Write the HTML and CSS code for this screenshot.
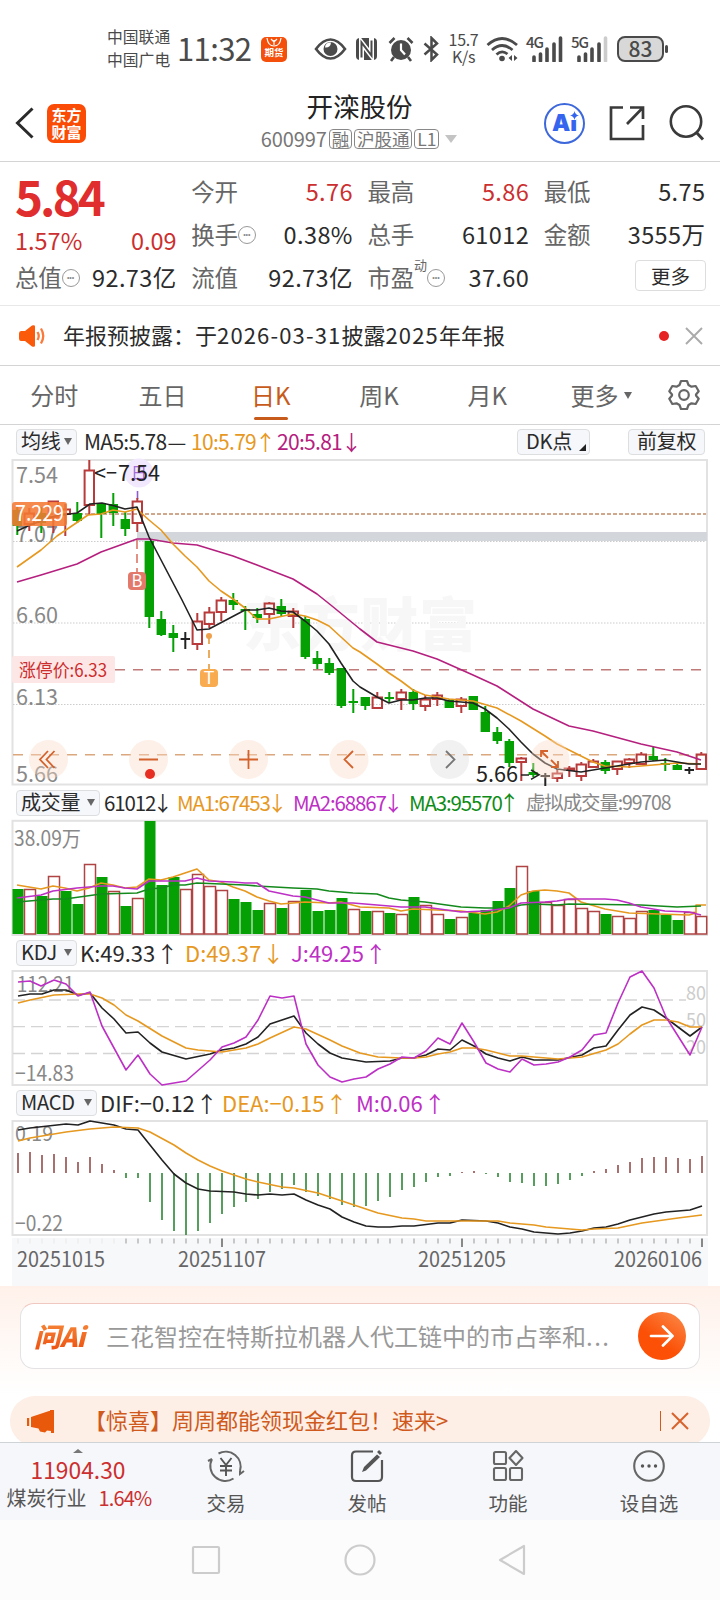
FILE: index.html
```html
<!DOCTYPE html>
<html lang="zh-CN">
<head>
    <meta charset="UTF-8">
    <meta name="viewport" content="width=device-width, initial-scale=1.0">
    <title>开滦股份 600997</title>
    <link rel="stylesheet" href="styles.css">
</head>
<body>
    <div class="statusbar">
        <div class="carriers"><span>中国联通</span><span>中国广电</span></div>
        <span class="clock">11:32</span>
        <span class="app-badge"><svg width="16" height="11" viewBox="0 0 16 11"><path d="M1 1q1 8 7 8t7-8M5 2l3 3 3-3M8 3v5" fill="none" stroke="#fff" stroke-width="1.200"/></svg><b>期货</b></span>
        <svg class="eye" width="33" height="24" viewBox="0 0 33 24"><path d="M2 12Q9 2.500 16.500 2.500T31 12Q24 21.500 16.500 21.500T2 12Z" fill="none" stroke="#4a4a4a" stroke-width="2.600"/><circle cx="16.500" cy="12" r="7" fill="#4a4a4a"/><path d="M11 10.500a5 5 0 0 1 6-5q-.5 5.500-6 5z" fill="#fff"/></svg>
        <svg class="nfc" width="23" height="24" viewBox="0 0 23 24"><rect x="1" y="1" width="21" height="22" rx="4" fill="#4a4a4a"/><path d="M6.500 24V5.500L16.500 18.500V0" fill="none" stroke="#fff" stroke-width="5"/><path d="M6.500 20.500V5.500L16.500 18.500V3.500" fill="none" stroke="#4a4a4a" stroke-width="2"/></svg>
        <svg class="alarm" width="26" height="26" viewBox="0 0 26 26"><circle cx="13" cy="14" r="10" fill="#4a4a4a"/><path d="M1.500 7l5-5M24.500 7l-5-5M6 21l-3 4M20 21l3 4" stroke="#4a4a4a" stroke-width="2.600"/><path d="M13 7.500V14l4 4.500" fill="none" stroke="#fff" stroke-width="2.200"/></svg>
        <svg class="bt" width="17" height="26" viewBox="0 0 17 26"><path d="M1.500 7.500L14 18.500 8.500 24V2L14 7.500 1.500 18.500" fill="none" stroke="#4a4a4a" stroke-width="2.500"/></svg>
        <div class="speed"><span>15.7</span><span>K/s</span></div>
        <svg class="wifi" width="33" height="26" viewBox="0 0 33 26"><g fill="none" stroke="#4a4a4a" stroke-width="2.800"><path d="M1.500 9Q16 -4 31 9"/><path d="M6 14Q16 5 26.500 14"/><path d="M10.500 18.500Q16 13.500 21.500 18"/></g><circle cx="16" cy="22.500" r="2.800" fill="#4a4a4a"/><path d="M26 19v6l-3.500-3zM28 19v6l3.500-3z" fill="#4a4a4a"/></svg>
        <div class="signal"><b>4G</b><svg width="36" height="26" viewBox="0 0 36 26"><path d="M7 21v4M13.500 18v7M20 13v12M27 8v17M33.500 2v23" stroke="#4a4a4a" stroke-width="3.600" stroke-linecap="round"/></svg></div>
        <div class="signal"><b>5G</b><svg width="36" height="26" viewBox="0 0 36 26"><path d="M7 21v4M13.500 18v7M20 13v12M27 8v17" stroke="#4a4a4a" stroke-width="3.600" stroke-linecap="round"/><path d="M33.500 2v23" stroke="#ccc" stroke-width="3.600" stroke-linecap="round"/></svg></div>
        <div class="battery">83</div>
    </div>

    <header class="header">
        <svg class="back" width="20" height="34" viewBox="0 0 20 34"><path d="M17.500 2.500L2.500 17l15 14.500" fill="none" stroke="#2b2b2b" stroke-width="3"/></svg>
        <div class="brand"><span>东方</span><span>财富</span></div>
        <div class="title">
            <h1>开滦股份</h1>
            <div class="code">600997<em>融</em><em>沪股通</em><em>L1</em><i class="caret"></i></div>
        </div>
        <div class="ai-btn">Ai<svg width="9" height="9" viewBox="0 0 9 9"><circle cx="3" cy="6" r="4" fill="#fff"/><path d="M4.500 0q.6 3.900 4.500 4.500-3.900.6-4.500 4.500Q3.900 5.100 0 4.500 3.900 3.900 4.500 0z" fill="#3565ee"/></svg></div>
        <svg class="share" width="36" height="36" viewBox="0 0 36 36"><path d="M14 2.500H2V34h32V20M21 2.500h13V14M34 2.500L18 19" fill="none" stroke="#3a3a3a" stroke-width="2.700"/></svg>
        <svg class="search" width="36" height="38" viewBox="0 0 36 38"><circle cx="17" cy="17.500" r="15.200" fill="none" stroke="#3a3a3a" stroke-width="2.600"/><path d="M27 28l7 7.500" stroke="#3a3a3a" stroke-width="3"/></svg>
    </header>

    <section class="quote">
        <div class="col col-price">
            <div class="price">5.84</div>
            <div class="row red change"><span>1.57%</span><span>0.09</span></div>
            <div class="row"><label>总值<i class="dots">•••</i></label><span>92.73亿</span></div>
        </div>
        <div class="col">
            <div class="row"><label>今开</label><span class="red">5.76</span></div>
            <div class="row"><label>换手<i class="dots">•••</i></label><span>0.38%</span></div>
            <div class="row"><label>流值</label><span>92.73亿</span></div>
        </div>
        <div class="col">
            <div class="row"><label>最高</label><span class="red">5.86</span></div>
            <div class="row"><label>总手</label><span>61012</span></div>
            <div class="row"><label>市盈<sup>动</sup><i class="dots">•••</i></label><span>37.60</span></div>
        </div>
        <div class="col">
            <div class="row"><label>最低</label><span>5.75</span></div>
            <div class="row"><label>金额</label><span>3555万</span></div>
            <div class="row end"><button class="more-btn">更多</button></div>
        </div>
    </section>

    <section class="notice">
        <svg width="26" height="22" viewBox="0 0 26 22"><path d="M0 8.500q0-2.500 2-2.500h4l7-5.500q3-1 3 1v19q0 2-3 1L6 16H2q-2 0-2-2.500z" fill="#fa5a0a"/><path d="M18.500 7q2.500 4 0 8M22 3.500q4.500 7.500 0 15" fill="none" stroke="#fa7a3a" stroke-width="2.300"/></svg>
        <p>年报预披露：于<span>2026-03-31</span>披露<span>2025</span>年年报</p>
        <i class="red-dot"></i>
        <svg width="18" height="18" viewBox="0 0 18 18"><path d="M1 1l16 16M17 1L1 17" stroke="#aaa" stroke-width="1.900"/></svg>
    </section>

    <nav class="tabs">
        <a>分时</a><a>五日</a><a class="active">日K</a><a>周K</a><a>月K</a>
        <a class="tab-more">更多<i class="tri"></i></a>
        <svg class="gear" width="32" height="32" viewBox="0 0 32 32"><path d="M13 2h6l1.500 4 3 1.700 4.200-.7 3 5.200-2.700 3.300v1l2.700 3.300-3 5.200-4.200-.7-3 1.700L19 30h-6l-1.500-4-3-1.700-4.200.7-3-5.200L4 16.500v-1l-2.700-3.300 3-5.200 4.200.7 3-1.700z" fill="none" stroke="#666" stroke-width="2.200" stroke-linejoin="round"/><circle cx="16" cy="16" r="4.800" fill="none" stroke="#666" stroke-width="2.200"/></svg>
    </nav>

    <div class="ind ind-ma">
        <span class="pick">均线<i class="tri"></i></span>
        <span>MA5:5.78<u>—</u></span>
        <span class="orange">10:5.79<b>↑</b></span>
        <span class="magenta">20:5.81<b>↓</b></span>
        <span class="pick dk">DK点<i class="corner"></i></span>
        <span class="pick fq">前复权</span>
    </div>
    <svg id="kline" class="chart" width="720" height="327" viewBox="0 459 720 327"></svg>

    <div class="ind ind-vol">
        <span class="pick">成交量<i class="tri"></i></span>
        <span class="now">61012<b>↓</b></span>
        <span class="orange">MA1:67453<b>↓</b></span>
        <span class="purple">MA2:68867<b>↓</b></span>
        <span class="green">MA3:95570<b>↑</b></span>
        <span class="gray">虚拟成交量:99708</span>
    </div>
    <svg id="volume" class="chart" width="720" height="116" viewBox="0 820 720 116"></svg>

    <div class="ind ind-kdj">
        <span class="pick">KDJ<i class="tri"></i></span>
        <span>K:49.33<b>↑</b></span>
        <span class="orange">D:49.37<b>↓</b></span>
        <span class="purple">J:49.25<b>↑</b></span>
    </div>
    <svg id="kdj" class="chart" width="720" height="116" viewBox="0 970 720 116"></svg>

    <div class="ind ind-macd">
        <span class="pick">MACD<i class="tri"></i></span>
        <span>DIF:−0.12<b>↑</b></span>
        <span class="orange">DEA:−0.15<b>↑</b></span>
        <span class="purple">M:0.06<b>↑</b></span>
    </div>
    <svg id="macd" class="chart" width="720" height="166" viewBox="0 1120 720 166"></svg>

    <section class="ask">
        <div class="ask-box">
            <span class="ask-logo">问Ai</span>
            <span class="ask-text">三花智控在特斯拉机器人代工链中的市占率和<u>...</u></span>
            <span class="ask-go"><svg width="26" height="22" viewBox="0 0 26 22"><path d="M2 11h21M14 1.500l9.500 9.500-9.500 9.500" fill="none" stroke="#fff" stroke-width="2.700" stroke-linecap="round" stroke-linejoin="round"/></svg></span>
        </div>
    </section>

    <section class="promo-wrap">
        <div class="promo">
            <svg width="27" height="23" viewBox="0 0 27 23"><path d="M0 8h2.200v8H0zM4 7L22 1h1V0h4v23h-3v-2l-4-.5-2 2-5-1-1.500-3L4 17z" fill="#e8590c"/></svg>
            <p>【惊喜】周周都能领现金红包！速来&gt;</p>
            <i class="bar"></i>
            <svg width="18" height="18" viewBox="0 0 18 18"><path d="M1 1l16 16M17 1L1 17" stroke="#d9622b" stroke-width="2"/></svg>
        </div>
    </section>

    <nav class="bottom">
        <div class="sector">
            <i class="up"></i>
            <strong>11904.30</strong>
            <div><span>煤炭行业</span><span class="red">1.64%</span></div>
        </div>
        <a>
            <svg width="38" height="34" viewBox="0 0 38 34"><path d="M11.500 4.500A15 15 0 0 1 33 22M26.500 29.500A15 15 0 0 1 5 10M1 12l4-2M33 22v3l4-3" fill="none" stroke="#666" stroke-width="2"/><path d="M13.500 9l5.500 7 5.500-7M13 17h12M13 21.500h12M19 16v11" fill="none" stroke="#555" stroke-width="1.900"/></svg>
            <span>交易</span>
        </a>
        <a>
            <svg width="34" height="34" viewBox="0 0 34 34"><path d="M23 2.500H6Q2 2.500 2 6.500V28q0 4 4 4h22q4 0 4-4V11" fill="none" stroke="#555" stroke-width="2.200"/><path d="M12 23l2-5L27 5.500l3 2.500L16 21.500z" fill="#555"/><path d="M28.500 4.500l2-2" stroke="#555" stroke-width="4"/></svg>
            <span>发帖</span>
        </a>
        <a>
            <svg width="34" height="34" viewBox="0 0 34 34"><g fill="none" stroke="#666" stroke-width="2.100"><rect x="3" y="3" width="12" height="12" rx="1.500"/><rect x="3" y="19" width="12" height="12" rx="1.500"/><rect x="19" y="19" width="12" height="12" rx="1.500"/><path d="M25 2l6.500 7-6.500 7-6.500-7z" stroke-linejoin="round"/></g></svg>
            <span>功能</span>
        </a>
        <a>
            <svg width="34" height="34" viewBox="0 0 34 34"><circle cx="17" cy="17" r="14.800" fill="none" stroke="#666" stroke-width="2.100"/><g fill="#555"><circle cx="10.500" cy="17" r="1.700"/><circle cx="17" cy="17" r="1.700"/><circle cx="23.500" cy="17" r="1.700"/></g></svg>
            <span>设自选</span>
        </a>
    </nav>

    <div class="sysnav">
        <svg width="720" height="80" viewBox="0 0 720 80"><g fill="none" stroke="#ccc" stroke-width="2.200" stroke-linejoin="round"><rect x="193" y="27" width="26" height="26" rx="1"/><circle cx="360" cy="40" r="14.500"/><path d="M524 26v28L500 40z"/></g></svg>
    </div>

    <script src="chart.js"></script>
</body>
</html>
```

FILE: styles.css
```css
* {
    box-sizing: border-box;
}
body {
    margin: 0;
    width: 720px;
    height: 1600px;
    overflow: hidden;
    background: #fff;
    color: #2b2b2b;
    font-family: "Noto Sans CJK SC", sans-serif;
    font-size: 22px;
    line-height: 1;
}
i, em, u {
    font-style: normal;
    text-decoration: none;
}
svg {
    display: block;
    flex: none;
}
h1, p {
    margin: 0;
    font-weight: normal;
}
.red { color: #cc2f2f; }
.orange { color: #e6981f; }
.magenta { color: #b5207f; }
.purple { color: #bd30c5; }
.green { color: #0f8c18; }
.gray { color: #888; }

/* status bar */
.statusbar {
    display: flex;
    align-items: center;
    height: 98px;
    padding-left: 107px;
    color: #4a4a4a;
    white-space: nowrap;
}
.carriers {
    display: flex;
    flex-direction: column;
    gap: 7px;
    width: 70px;
    padding-bottom: 1px;
    font-size: 15.800px;
}
.clock {
    width: 84px;
    padding-bottom: 4px;
    font-size: 31px;
    letter-spacing: -0.600px;
}
.app-badge {
    display: flex;
    flex-direction: column;
    align-items: center;
    width: 26px;
    height: 25px;
    margin-right: 27px;
    border-radius: 5px;
    background: #f4500c;
    color: #fff;
}
.app-badge b {
    font-size: 9.500px;
}
.eye { margin-right: 8px; }
.nfc { margin-right: 10px; }
.alarm { margin-right: 9px; }
.bt { margin-right: 8px; }
.speed {
    display: flex;
    flex-direction: column;
    align-items: center;
    gap: 1px;
    width: 31px;
    margin-right: 7px;
    padding-bottom: 3px;
    font-size: 16px;
    letter-spacing: -0.300px;
}
.wifi { margin-right: 8px; }
.signal {
    position: relative;
    margin-right: 9px;
}
.signal b {
    position: absolute;
    left: -1px;
    top: -2px;
    font-size: 15px;
    font-weight: 500;
    letter-spacing: -1px;
}
.battery {
    position: relative;
    width: 47px;
    height: 26px;
    border: 2px solid #4a4a4a;
    border-radius: 8px;
    background: #d8d8d8;
    font-size: 21px;
    font-weight: 500;
    line-height: 20px;
    text-align: center;
}
.battery::after {
    content: "";
    position: absolute;
    right: -6px;
    top: 7px;
    width: 3px;
    height: 8px;
    border-radius: 2px;
    background: #4a4a4a;
}

/* header */
.header {
    display: flex;
    align-items: center;
    height: 64px;
    padding: 0 15px 13px;
    border-bottom: 1px solid #d4d4d4;
}
.brand {
    display: flex;
    flex-direction: column;
    align-items: center;
    justify-content: center;
    width: 39px;
    height: 39px;
    margin-left: 12px;
    border-radius: 7px;
    background: #fa4c06;
    color: #fff;
    font-size: 15px;
    font-weight: bold;
    line-height: 17px;
}
.title {
    display: flex;
    flex-direction: column;
    align-items: center;
    flex: 1;
    padding-left: 90px;
}
.title h1 {
    margin-left: -1px;
    color: #222;
    font-size: 26.500px;
    line-height: 32px;
}
.code {
    display: flex;
    align-items: center;
    height: 34px;
    margin-left: -2px;
    color: #777;
    font-size: 20px;
    letter-spacing: -0.100px;
    white-space: nowrap;
}
.code em {
    margin-left: 2px;
    padding: 0 2px;
    border: 1px solid #888;
    border-radius: 4px;
    font-size: 17.500px;
    line-height: 18px;
}
.caret {
    margin-left: 6px;
    border: 6px solid transparent;
    border-top: 8px solid #c4c4c4;
    border-bottom: 0;
}
.ai-btn {
    position: relative;
    width: 41px;
    height: 41px;
    border: 2px solid #3d68dc;
    border-radius: 50%;
    color: #3565ee;
    font-family: "Inter", sans-serif;
    font-size: 23px;
    font-weight: 900;
    line-height: 37px;
    text-align: center;
}
.ai-btn svg {
    position: absolute;
    right: 4px;
    top: 6px;
}
.share { margin-left: 24px; }
.search { margin-left: 24px; }

/* quote */
.quote {
    display: grid;
    grid-template-columns: repeat(4, 1fr);
    column-gap: 15px;
    height: 144px;
    padding: 8px 15px 0;
    border-bottom: 1px solid #e8e8e8;
    font-size: 23.500px;
    white-space: nowrap;
}
.row {
    display: flex;
    align-items: center;
    justify-content: space-between;
    height: 43px;
}
.row > span {
    margin-right: -0.400px;
    letter-spacing: 0.400px;
}
.row.end { justify-content: flex-end; }
.row label {
    display: flex;
    align-items: center;
    color: #666;
    letter-spacing: -0.200px;
}
.row sup {
    align-self: flex-start;
    margin-top: -8px;
    font-size: 13px;
    line-height: 13px;
}
.price {
    height: 50px;
    color: #e02d2d;
    font-size: 47.500px;
    font-weight: bold;
    line-height: 52px;
    letter-spacing: -2.900px;
}
.row.change {
    height: 36px;
    padding-top: 5px;
}
.row.change span { letter-spacing: 0; }
.dots {
    width: 18px;
    height: 18px;
    border: 1.500px solid #999;
    border-radius: 50%;
    color: #888;
    font: 7px/15px "Liberation Sans", sans-serif;
    letter-spacing: 0;
    text-align: center;
}
.more-btn {
    width: 71px;
    height: 31px;
    margin: -4px -1px 0 0;
    padding: 0;
    border: 1.500px solid #ddd;
    border-radius: 4px;
    background: #fff;
    color: #2b2b2b;
    font: 19.500px/25px "Noto Sans CJK SC", sans-serif;
}

/* notice */
.notice {
    display: flex;
    align-items: center;
    height: 60px;
    padding: 0 17px 0 19px;
    border-bottom: 1px solid #d4d4d4;
}
.notice p {
    flex: 1;
    margin-left: 18px;
    padding-bottom: 4px;
}
.notice p span { letter-spacing: 1.150px; }
.red-dot {
    width: 10px;
    height: 10px;
    margin-right: 16px;
    border-radius: 50%;
    background: #e62222;
}

/* tabs */
.tabs {
    display: flex;
    align-items: center;
    height: 59px;
    border-bottom: 1px solid #d4d4d4;
    color: #666;
    font-size: 24px;
}
.tabs a {
    position: relative;
    width: 108.300px;
    text-align: center;
}
.tabs .active { color: #c75b1c; }
.tabs .active::after {
    content: "";
    position: absolute;
    left: 37px;
    bottom: -13px;
    width: 34px;
    height: 3px;
    border-radius: 2px;
    background: #c75b1c;
}
.tabs .tab-more {
    display: flex;
    align-items: center;
    width: 127px;
    padding-left: 29px;
}
.tri {
    border: 4.500px solid transparent;
    border-top: 7px solid #666;
    border-bottom: 0;
}
.tab-more .tri { margin-left: 6px; }

/* indicator rows */
.ind {
    display: grid;
    align-items: center;
    height: 34px;
    padding-left: 16px;
    white-space: nowrap;
}
.ind > span {
    display: flex;
    align-items: center;
    padding-bottom: 2px;
}
.ind b {
    display: flex;
    justify-content: center;
    width: 14px;
    font-weight: normal;
}
.ind > .pick {
    justify-content: space-between;
    height: 26px;
    padding: 0 4px 2px;
    border: 1.500px solid #dcdee0;
    border-radius: 4px;
    background: #f6f7fa;
    font-size: 20px;
    letter-spacing: -0.200px;
}
.ind-ma {
    grid-template-columns: 61px 107px 86px 240px 111px 78px;
    font-size: 21px;
    letter-spacing: -0.700px;
}
.ind-ma > span:nth-child(2),
.ind-ma > span:nth-child(3),
.ind-ma > span:nth-child(4) { padding-left: 7px; }
.ind-ma u { width: 19px; margin-left: 1px; }
.ind-ma b { margin-left: 2px; }
.ind-ma > .dk {
    width: 73px;
    margin-left: 7px;
    padding: 0 3px 2px 8px;
}
.ind-ma > .fq {
    width: 77px;
    margin-left: 7px;
    padding: 0 8px 2px;
}
.corner {
    align-self: flex-end;
    margin-bottom: 1px;
    border-left: 7px solid transparent;
    border-bottom: 7px solid #222;
}
.ind-vol {
    grid-template-columns: 84px 73px 116px 116px 117px 180px;
    font-size: 20.500px;
    letter-spacing: -1.150px;
}
.ind-vol > span + span { padding-left: 4px; }
.ind-vol .gray {
    font-size: 19.500px;
    letter-spacing: -1.150px;
}
.ind-kdj {
    grid-template-columns: 61px 105px 106px 200px;
}
.ind-macd {
    grid-template-columns: 81px 122px 134px 200px;
}
.ind-kdj > span + span { padding-left: 3px; }
.ind-macd > span + span { padding-left: 3px; }
.ind-kdj b, .ind-macd b { margin-left: 5px; }

/* ask box */
.ask {
    height: 108px;
    padding: 17px 20px 0;
    background: linear-gradient(#fff1ea, #fff);
}
.ask-box {
    display: flex;
    align-items: center;
    height: 66px;
    padding: 0 13px;
    border: 1px solid #e4e2e4;
    border-top-color: #f0c8c0;
    border-radius: 14px;
    background: #fff;
}
.ask-logo {
    width: 72px;
    background: linear-gradient(#f58a3c, #ee4f0e);
    -webkit-background-clip: text;
    background-clip: text;
    color: transparent;
    font-size: 26.500px;
    font-weight: 900;
    font-style: italic;
    letter-spacing: -0.800px;
    line-height: 32px;
}
.ask-text {
    flex: 1;
    padding-bottom: 1px;
    color: #999;
    font-size: 24px;
    white-space: nowrap;
}
.ask-text u { letter-spacing: 1.500px; }
.ask-go {
    display: flex;
    align-items: center;
    justify-content: center;
    width: 48px;
    height: 48px;
    border-radius: 50%;
    background: linear-gradient(35deg, #fb5006 40%, #fb8c4c);
}

/* promo */
.promo-wrap {
    height: 48px;
    padding: 2px 10px 0;
    overflow: hidden;
}
.promo {
    display: flex;
    align-items: center;
    height: 50px;
    padding: 0 21px 0 17px;
    border-radius: 25px;
    background: #fdeee6;
    color: #cf5a1b;
}
.promo p {
    flex: 1;
    margin-left: 30px;
    padding-bottom: 4px;
}
.promo .bar {
    width: 1.500px;
    height: 20px;
    margin-right: 10px;
    background: #cf5a1b;
}

/* bottom nav */
.bottom {
    display: flex;
    height: 78px;
    border-top: 1px solid #d0d3d6;
    background: #f6f7fa;
    color: #555;
    font-size: 19.500px;
}
.bottom a {
    display: flex;
    flex-direction: column;
    align-items: center;
    width: 141px;
    padding: 6px 1px 0 0;
}
.bottom a span { margin-top: 10px; }
.sector {
    display: flex;
    flex-direction: column;
    align-items: center;
    width: 156px;
    padding-top: 6px;
    white-space: nowrap;
}
.sector .up {
    border: 5.500px solid transparent;
    border-bottom: 4px solid #777;
    border-top: 0;
}
.sector strong {
    margin-top: 6px;
    color: #cc2f2f;
    font-size: 22.800px;
    font-weight: normal;
}
.sector div {
    display: flex;
    gap: 12px;
    margin: 6px 0 0 2px;
    font-size: 20px;
}
.sector .red { letter-spacing: -0.900px; }
.sysnav {
    height: 80px;
    background: #fcfcfc;
}

/* charts */
.chart {
    overflow: visible;
    fill: none;
    font-size: 22px;
}
.chart text { stroke: none; }
```

FILE: chart.js
```js
const RED = "#b83a3a", GREEN = "#04a004", BLACK = "#222", ORANGE = "#e6981f", MAGENTA = "#b5207f", PURPLE = "#bd30c5";
const STEP = 12;

// body top, body bottom, high, low, colour (r/g/k)
const candles = [
    [510,526,506,535,"g"],[513,524,508,531,"r"],[513,523,507,533,"g"],[501,517,501,533,"r"],[509,514,504,536,"r"],
    [513,521,502,523,"g"],[470,505,460,515,"r"],[504,514,503,538,"g"],[504,513,493,526,"g"],[519,529,512,536,"g"],
    [501,523,498,532,"r"],[541,617,541,628,"g"],[619,635,611,636,"g"],[633,638,625,652,"g"],[638,640,632,649,"k"],
    [621,644,613,650,"r"],[612,624,607,628,"r"],[600,612,597,621,"r"],[600,605,593,610,"g"],[609,611,606,630,"g"],
    [614,618,608,623,"g"],[603,614,602,624,"r"],[606,614,599,616,"g"],[611,616,608,628,"r"],[619,657,616,659,"g"],
    [658,664,651,669,"g"],[663,673,658,675,"g"],[668,706,668,708,"g"],[701,703,689,713,"g"],[697,706,697,710,"g"],
    [697,708,692,709,"r"],[697,699,692,703,"g"],[692,699,689,710,"r"],[692,704,689,710,"g"],[699,706,695,711,"r"],
    [695,699,692,706,"r"],[700,708,699,708,"g"],[699,706,697,713,"r"],[696,710,696,710,"g"],[712,732,706,732,"g"],
    [732,741,727,744,"g"],[741,763,739,767,"g"],[758,762,757,781,"r"],[772,775,763,777,"g"],[775,777,773,786,"k"],
    [773,778,769,782,"r"],[768,770,766,777,"r"],[764,776,762,781,"r"],[761,767,759,768,"r"],[762,771,760,774,"g"],
    [761,769,761,775,"r"],[759,763,758,768,"r"],[754,764,752,764,"r"],[756,760,747,761,"g"],[763,765,758,771,"g"],
    [765,770,764,770,"g"],[769,771,767,774,"k"],[754,769,752,770,"r"]
];
const ma5 = "17,531 30,525 55,516 77,513 90,504 102,503 115,506 125,509 137,507 149,537 182,600 197,630 209,629 245,610 257,610 269,608 281,611 293,612 305,621 317,631 329,644 341,663 353,681 360,687 377,697 389,703 401,700 413,700 425,698 437,698 449,701 473,703 485,709 497,718 509,729 521,742 533,754 545,763 557,769 581,772 605,768 641,762 665,760 677,762 689,764 701,764";
const ma10 = "17,567 41,550 57,536 88,515 101,514 113,510 125,512 137,509 149,520 161,530 173,544 185,556 197,567 209,581 221,591 233,599 245,608 257,619 269,619 293,614 305,616 317,620 329,626 341,637 353,648 360,652 377,664 389,673 401,681 413,690 425,695 449,699 473,701 497,708 521,721 545,736 557,744 581,756 593,762 605,766 629,767 665,764 677,763 701,764";
const ma20 = "17,582 41,575 77,564 101,552 137,539 149,539 173,543 197,545 233,556 257,565 293,579 317,594 332,606 360,629 377,642 413,651 437,659 473,675 497,686 533,709 569,726 593,731 641,744 677,752 701,760";

const volTop = [889,889,896,876,891,904,864,877,891,906,898,821,885,877,889,874,886,890,899,902,910,903,908,901,890,911,910,898,909,911,911,913,914,897,905,914,919,917,913,910,901,888,866,891,902,905,899,908,911,914,916,918,911,910,915,920,912,916];
const volColor = "grgrggrgrg" + "rgggrrrrgg" + "grgrggggrg" + "rgrgrrgrgg" + "ggrgrrrrrg" + "rrrgggrr";
const volMa1 = "17,885 41,889 53,886 65,888 77,891 89,888 101,883 113,885 125,888 137,887 149,879 161,880 173,877 185,873 197,869 209,880 221,882 233,887 245,891 257,897 269,901 281,904 305,902 329,903 341,902 360,907 389,908 401,911 413,909 437,910 461,911 485,914 497,912 509,906 521,895 533,891 545,890 557,891 569,893 581,902 605,909 629,913 689,915 696,913 696,905 706,905";
const volMa2 = "17,898 41,895 53,891 77,888 101,886 113,886 125,888 137,889 149,881 185,881 197,878 209,881 233,882 245,883 257,883 269,891 293,896 305,897 329,903 353,903 377,905 401,907 425,907 461,912 485,911 509,908 521,903 545,902 557,901 569,899 605,899 617,900 629,903 641,907 665,911 689,912 701,915";
const volMa3 = "17,902 41,900 53,899 65,899 101,894 137,893 149,889 161,888 173,885 185,885 197,883 221,884 245,885 257,886 293,888 317,889 329,891 353,893 377,894 389,898 401,900 425,902 461,907 485,908 509,908 521,905 533,904 557,905 569,904 641,905 677,907 701,906";

const kLine = "18,996 30,994 42,994 54,990 66,990 78,995 90,993 102,1008 114,1019 126,1033 138,1032 150,1043 162,1052 186,1059 210,1054 222,1050 234,1048 246,1044 258,1037 270,1024 294,1016 306,1033 318,1044 330,1053 342,1058 360,1061 366,1062 390,1061 402,1058 414,1058 426,1055 438,1049 450,1050 462,1040 474,1046 486,1054 498,1058 510,1061 522,1057 534,1060 558,1060 582,1055 594,1048 606,1046 618,1030 630,1015 642,1007 654,1010 666,1018 678,1027 690,1036 702,1027";
const dLine = "18,1003 30,1000 54,995 78,994 90,994 102,998 114,1005 126,1015 138,1021 162,1036 186,1048 198,1050 222,1052 246,1048 258,1044 270,1038 294,1027 306,1029 330,1040 342,1046 360,1053 378,1057 402,1058 414,1058 426,1057 438,1054 450,1052 462,1048 474,1048 486,1050 510,1056 522,1056 534,1057 558,1059 582,1057 606,1050 618,1044 630,1034 642,1025 654,1020 666,1020 678,1022 690,1027 702,1027";
const jLine = "18,982 30,981 41,986 54,980 66,984 78,996 90,992 102,1026 126,1070 138,1055 150,1074 162,1085 186,1081 210,1060 222,1047 234,1043 246,1037 258,1020 270,996 282,998 294,996 306,1044 318,1065 330,1077 342,1082 354,1079 366,1077 378,1069 390,1064 402,1057 414,1058 426,1051 438,1038 450,1044 462,1023 474,1042 486,1063 498,1069 510,1072 522,1059 534,1065 546,1064 558,1062 570,1057 582,1050 594,1035 606,1033 618,1003 630,977 642,971 654,988 666,1017 678,1036 690,1055 702,1027";

const macdEnd = [1153,1152,1155,1154,1157,1162,1157,1164,1170,1178,1178,1202,1220,1231,1235,1231,1223,1214,1207,1202,1199,1192,1189,1185,1192,1196,1199,1205,1207,1206,1201,1197,1190,1187,1182,1177,1176,1172,1171,1174,1177,1182,1183,1186,1186,1184,1180,1176,1171,1169,1165,1162,1158,1157,1157,1158,1159,1156];
const dif = "18,1130 30,1128 66,1124 78,1125 90,1121 102,1123 114,1125 126,1129 138,1130 150,1145 162,1160 174,1174 186,1183 198,1189 210,1191 234,1192 246,1194 258,1195 270,1194 282,1195 294,1194 306,1200 318,1205 330,1209 342,1217 354,1222 366,1226 378,1227 390,1227 402,1226 414,1226 438,1223 450,1223 462,1220 486,1221 498,1223 510,1227 522,1229 534,1232 558,1234 570,1233 582,1231 594,1228 606,1227 618,1224 630,1220 654,1214 666,1212 690,1210 702,1206";
const dea = "18,1141 30,1138 66,1132 90,1129 114,1127 138,1128 150,1132 174,1145 186,1153 198,1160 210,1166 222,1171 246,1179 258,1182 282,1187 294,1188 318,1193 342,1201 360,1207 378,1213 402,1218 414,1219 426,1221 498,1221 510,1223 534,1225 546,1227 582,1230 594,1229 618,1228 642,1223 678,1218 702,1215";

function line(points, color) {
    return `<polyline points="${points}" stroke="${color}" stroke-width="1.6" stroke-linejoin="round"/>`;
}
function seg(x1, y1, x2, y2, color, w, dash) {
    return `<line x1="${x1}" y1="${y1}" x2="${x2}" y2="${y2}" stroke="${color}" stroke-width="${w}"${dash ? ` stroke-dasharray="${dash}"` : ""}/>`;
}
function rect(x, y, w, h, attrs) {
    return `<rect x="${x}" y="${y}" width="${w}" height="${h}" ${attrs}/>`;
}
function text(x, y, str, color, len, size) {
    return `<text x="${x}" y="${y}" fill="${color}"${size ? ` font-size="${size}"` : ""}${len ? ` textLength="${len}" lengthAdjust="spacingAndGlyphs"` : ""}>${str}</text>`;
}
function frame(y1, y2) {
    return rect(12.5, y1, 694.5, y2 - y1, 'stroke="#e2e2e2" stroke-width="2"');
}

function drawKline() {
    let s = frame(460, 784.5);
    [541.5, 623, 704.5].forEach(y => s += seg(13, y, 706, y, "#ccc", 1, "1.5 1.5"));
    s += `<text x="243" y="646" fill="#f7f7f7" font-size="58" font-weight="900" textLength="234">东方财富</text>`;
    s += rect(137, 532, 570, 9, 'fill="#d3d7dc"');
    s += seg(13, 514, 706, 514, "#cfa78c", 1.8, "4 2");
    s += seg(115, 669.8, 702, 669.8, "#c07a78", 1.6, "10 8");
    s += seg(13, 754.7, 706, 754.7, "#dba77c", 1.4, "10 8");
    s += text(16, 483, "7.54", "#888", 42);
    s += text(16, 542, "7.07", "#888", 42);
    s += text(16, 623, "6.60", "#888", 42);
    s += text(16, 705, "6.13", "#888", 42);
    s += text(16, 782, "5.66", "#888", 42);
    s += '<circle cx="139" cy="473" r="14.5" fill="#f1e8fd"/>' + text(131, 479, "日", "#a06ad8", 0, 16);
    s += seg(137.5, 491, 137.5, 499, "#8c5cc8", 1.6);
    s += seg(137, 540, 137, 572, "#e08578", 1.8, "9 5");
    candles.forEach((c, i) => {
        const x = 17.3 + i * STEP;
        const color = { r: RED, g: GREEN, k: BLACK }[c[4]];
        s += seg(x, c[2], x, c[0], color, 2) + seg(x, c[1], x, c[3], color, 2);
        if (c[4] === "r") {
            s += rect(x - 4.7, c[0] + 0.5, 9.4, Math.max(c[1] - c[0] - 0.5, 1), `stroke="${color}" stroke-width="2"`);
        } else {
            s += rect(x - 4.7, c[0], 9.4, c[1] - c[0], `fill="${color}"`);
        }
    });
    s += line(ma20, MAGENTA) + line(ma10, ORANGE) + line(ma5, BLACK);
    s += text(94, 481, "&lt;", BLACK, 12) + text(106, 481, "−", BLACK, 11) + text(118, 481, "7.54", BLACK, 42);
    s += rect(12, 502, 55, 24, 'rx="3" fill="#f47a33" fill-opacity=".88"') + text(15, 521, "7.229", "#fff", 49, 21);
    s += rect(128, 572, 18, 18, 'rx="4" fill="#e2796b"') + text(131.5, 587, "B", "#fff", 11, 17);
    s += '<circle cx="209" cy="636" r="3" fill="#f0a04a"/>' + seg(209, 636, 209, 669, "#e8a44e", 1.8, "8 6");
    s += rect(200, 669, 18, 18, 'rx="4" fill="#f9ab50"') + text(203.5, 684, "T", "#fff", 11, 17);
    s += rect(12, 656, 103, 27, 'rx="2" fill="#fde6e6"') + text(19, 676.5, "涨停价:6.33", "#cb2c2c", 88, 18);

    // zoom / pan buttons
    [48.5, 148.5, 248.5, 349, 550].forEach(x => s += `<circle cx="${x}" cy="759.5" r="19.5" fill="#fbd9c6" fill-opacity=".4"/>`);
    s += '<circle cx="449.5" cy="759.5" r="19.5" fill="#ddd" fill-opacity=".4"/>';
    s += '<g stroke="#d4622c" stroke-width="1.8"><path d="M48 751l-8 8.5 8 8.5M54.500 751l-8 8.5 8 8.5M139 759.5h19M239 759.5h19M248.5 750v19M353 751l-8.5 8.500 8.5 8.5"/><path d="M541 757v-6h7M541 751l7 7M558 761v6h-7M558 767l-7-7"/></g>';
    s += '<path d="M446 751l8.500 8.5-8.500 8.5" stroke="#777" stroke-width="1.8"/>';
    s += '<circle cx="150" cy="774" r="5" fill="#e62e22"/>';
    s += text(476, 781.5, "5.66", BLACK, 42) + seg(521, 775, 529, 775, BLACK, 1.5) + '<path d="M531 770l8 4.7-8 4.7" stroke="#222" stroke-width="1.6"/>';
    document.getElementById("kline").innerHTML = s;
}

function drawVolume() {
    let s = frame(820.8, 935);
    s += text(14, 846, "38.09万", "#888", 67, 21);
    volTop.forEach((top, i) => {
        const x = 12.5 + i * STEP;
        if (volColor[i] === "r") {
            s += rect(x, top + 0.5, i === 57 ? 10.2 : 11, 933.5 - top, 'fill="#fff" stroke="#b04444" stroke-width="1.5"');
        } else {
            s += rect(x, top, 11, 934 - top, `fill="${GREEN}"`);
        }
    });
    s += line(volMa1, ORANGE) + line(volMa3, "#148a1c") + line(volMa2, PURPLE);
    document.getElementById("volume").innerHTML = s;
}

function drawKdj() {
    let s = frame(971, 1085);
    [1000, 1026.6, 1053.5].forEach(y => s += seg(13, y, 686, y, "#d4d4d4", 1.4, "12 6"));
    s += text(686, 1000, "80", "#ccc", 20, 19) + text(686, 1027, "50", "#ccc", 20, 19) + text(686, 1054, "20", "#ccc", 20, 19);
    s += text(17, 991.5, "112.21", "#888", 57, 21) + text(15, 1081, "−14.83", "#888", 59, 21);
    s += line(kLine, BLACK) + line(dLine, ORANGE) + line(jLine, PURPLE);
    document.getElementById("kdj").innerHTML = s;
}

function drawMacd() {
    let s = rect(12, 1238, 696, 48, 'fill="#f7f8fa"') + frame(1121, 1235);
    s += text(15, 1141, "0.19", "#888", 38, 20) + text(15, 1231, "−0.22", "#888", 48, 21);
    macdEnd.forEach((end, i) => {
        const x = 18 + i * STEP;
        s += seg(x, 1173, x, end, end < 1173 ? "#a06060" : "#44944a", 1.8);
        const major = i === 17 || i === 37 || i === 57;
        s += seg(x, 1238.5, x, major ? 1247 : 1243.5, major ? "#888" : i < 9 ? "#eee" : "#bbb", major ? 2 : 1.6);
    });
    s += line(dif, BLACK) + line(dea, ORANGE);
    s += text(17, 1266.5, "20251015", "#666", 88, 21) + text(178, 1266.5, "20251107", "#666", 88, 21);
    s += text(418, 1266.5, "20251205", "#666", 88, 21) + text(614, 1266.5, "20260106", "#666", 88, 21);
    document.getElementById("macd").innerHTML = s;
}

drawKline();
drawVolume();
drawKdj();
drawMacd();
```
